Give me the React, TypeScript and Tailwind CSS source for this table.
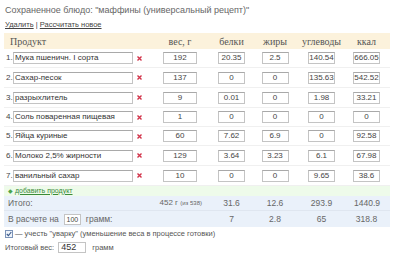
import React from 'react';

type Row = {
  name: string;
  weight: string;
  protein: string;
  fat: string;
  carbs: string;
  kcal: string;
};

const rows: Row[] = [
  { name: 'Мука пшеничн. I сорта', weight: '192', protein: '20.35', fat: '2.5', carbs: '140.54', kcal: '666.05' },
  { name: 'Сахар-песок', weight: '137', protein: '0', fat: '0', carbs: '135.63', kcal: '542.52' },
  { name: 'разрыхлитель', weight: '9', protein: '0.01', fat: '0', carbs: '1.98', kcal: '33.21' },
  { name: 'Соль поваренная пищевая', weight: '1', protein: '0', fat: '0', carbs: '0', kcal: '0' },
  { name: 'Яйца куриные', weight: '60', protein: '7.62', fat: '6.9', carbs: '0', kcal: '92.58' },
  { name: 'Молоко 2,5% жирности', weight: '129', protein: '3.64', fat: '3.23', carbs: '6.1', kcal: '67.98' },
  { name: 'ванильный сахар', weight: '10', protein: '0', fat: '0', carbs: '9.65', kcal: '38.6' },
];

// row heights alternate a little to follow the reference pitch
const heights = ['h-[19px]', 'h-[20px]', 'h-[20px]', 'h-[19px]', 'h-[19px]', 'h-[20px]', 'h-[20px]'];

const cols = 'grid grid-cols-[154px_44px_59px_28px_65px_25px]';

function Box({ value, w }: { value: string; w: string }) {
  return (
    <span
      className={`${w} h-[12px] shrink-0 border border-[#c4c4c4] border-t-[#a9a9a9] bg-white text-center text-[8px] leading-[10px] text-[#444]`}
    >
      {value}
    </span>
  );
}

function Cross() {
  return (
    <svg width="5" height="5" viewBox="0 0 5 5" className="shrink-0" aria-hidden="true">
      <path d="M0.5 0.5 L4.5 4.5 M4.5 0.5 L0.5 4.5" stroke="#d2334a" strokeWidth="1.4" />
    </svg>
  );
}

export default function App() {
  return (
    <div className="h-[257px] w-[400px] overflow-hidden bg-white font-['Liberation_Sans',Arial,sans-serif]">
      <div className="pl-[5px] pt-[3px] text-[9px] leading-[14px] text-[#666]">
        Сохраненное блюдо: "маффины (универсальный рецепт)"
      </div>
      <div className="mt-[2px] pl-[5px] text-[7.5px] leading-[12px] text-[#444]">
        <span className="underline">Удалить</span> | <span className="underline">Рассчитать новое</span>
      </div>

      <div className="ml-[4px] mt-[2px] w-[386px]">
        <div className={`${cols} h-[16px] items-center bg-[#fcf2dc] font-['Liberation_Serif',serif] text-[10px] text-[#555]`}>
          <span className="pl-[6px]">Продукт</span>
          <span className="text-center">вес, г</span>
          <span className="text-center">белки</span>
          <span className="text-center">жиры</span>
          <span className="text-center">углеводы</span>
          <span className="text-center">ккал</span>
        </div>

        {rows.map((r, i) => (
          <div key={i} className={`${cols} ${heights[i]} items-center border-b border-[#f0f0f0]`}>
            <div className="flex items-center pl-[2px]">
              <span className="w-[7px] text-[8px] text-[#444]">{i + 1}.</span>
              <span className="h-[12px] w-[120px] border border-[#c4c4c4] border-t-[#a9a9a9] pl-[1px] text-[8px] leading-[10px] text-[#333]">
                {r.name}
              </span>
              <span className="ml-[4px]">
                <Cross />
              </span>
            </div>
            <div className="flex justify-center">
              <Box value={r.weight} w="w-[34px]" />
            </div>
            <div className="flex justify-center">
              <Box value={r.protein} w="w-[27px]" />
            </div>
            <div className="flex justify-center">
              <Box value={r.fat} w="w-[27px]" />
            </div>
            <div className="flex justify-center">
              <Box value={r.carbs} w="w-[27px]" />
            </div>
            <div className="flex justify-center">
              <Box value={r.kcal} w="w-[27px]" />
            </div>
          </div>
        ))}

        <div className="flex h-[10px] items-center bg-[#eefbea] pl-[4px] text-[7px] text-[#3a8a3a]">
          <span className="mr-[2px] text-[6px] text-[#4aa34a]">◆</span>
          <span className="underline">добавить продукт</span>
        </div>

        <div className={`${cols} h-[15px] items-center border-b border-[#dfe6f0] bg-[#eaf1fa] text-[8.5px] text-[#666]`}>
          <span className="pl-[4px]">Итого:</span>
          <span className="-ml-[40px] text-right text-[8px]">
            452 г <span className="text-[6px]">(из 538)</span>
          </span>
          <span className="text-center">31.6</span>
          <span className="text-center">12.6</span>
          <span className="text-center">293.9</span>
          <span className="text-center">1440.9</span>
        </div>
        <div className={`${cols} h-[16px] items-center bg-[#eaf1fa] text-[8.5px] text-[#666]`}>
          <span className="flex items-center pl-[4px]">
            В расчете на
            <span className="mx-[5px] h-[11px] w-[17px] border border-[#c4c4c4] bg-white text-center text-[7px] leading-[9px] text-[#444]">
              100
            </span>
            грамм:
          </span>
          <span />
          <span className="text-center">7</span>
          <span className="text-center">2.8</span>
          <span className="text-center">65</span>
          <span className="text-center">318.8</span>
        </div>
      </div>

      <div className="ml-[5px] flex h-[13px] items-center text-[7.5px] text-[#555]">
        <span className="flex h-[8px] w-[8px] items-center justify-center border border-[#7b93b8] bg-[#eef3fa]">
          <svg width="6" height="6" viewBox="0 0 6 6" aria-hidden="true">
            <path d="M0.8 3 L2.4 4.6 L5.3 1" stroke="#3b5a8a" strokeWidth="1.1" fill="none" />
          </svg>
        </span>
        <span className="ml-[2px]">— учесть "уварку" (уменьшение веса в процессе готовки)</span>
      </div>
      <div className="ml-[5px] mt-[1px] flex h-[13px] items-center text-[7.5px] text-[#555]">
        <span>Итоговый вес:</span>
        <span className="ml-[4px] h-[11px] w-[28px] border border-[#c4c4c4] bg-white pl-[2px] text-[9px] leading-[9px] text-[#333]">
          452
        </span>
        <span className="ml-[6px]">грамм</span>
      </div>
    </div>
  );
}
